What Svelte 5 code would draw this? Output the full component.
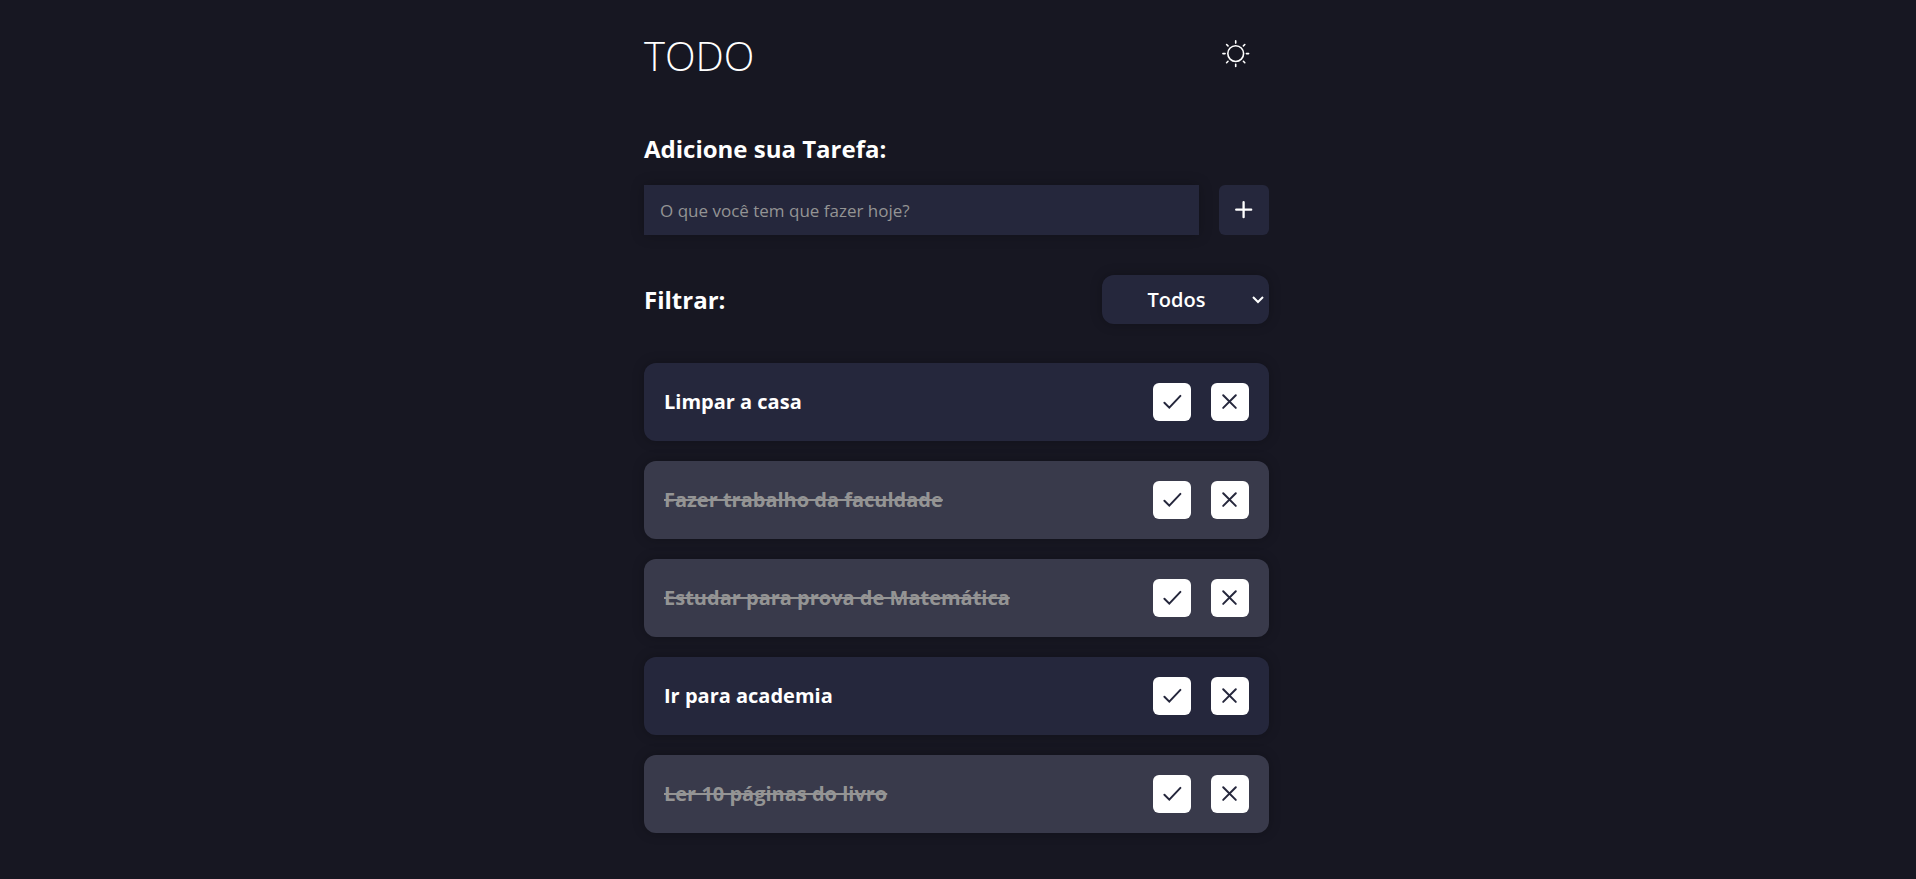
<script>
  let tasks = $state([
    { id: 1, title: 'Limpar a casa', done: false },
    { id: 2, title: 'Fazer trabalho da faculdade', done: true },
    { id: 3, title: 'Estudar para prova de Matemática', done: true },
    { id: 4, title: 'Ir para academia', done: false },
    { id: 5, title: 'Ler 10 páginas do livro', done: true }
  ]);
  let draft = $state('');
  let filter = $state('all');
  let light = $state(false);

  let visible = $derived(
    tasks.filter((t) => filter === 'all' || (filter === 'done' ? t.done : !t.done))
  );

  function add(event) {
    event.preventDefault();
    const title = draft.trim();
    if (!title) return;
    tasks.push({ id: Date.now(), title, done: false });
    draft = '';
  }

  function remove(id) {
    tasks = tasks.filter((t) => t.id !== id);
  }
</script>

<div class="page" class:light>
  <main>
    <header>
      <h1>TODO</h1>
      <button class="theme" type="button" aria-label="Alternar tema" onclick={() => (light = !light)}>
        <svg viewBox="0 0 28 28" width="28" height="28" fill="none" stroke="currentColor" stroke-width="1.6" stroke-linecap="round" aria-hidden="true">
          <circle cx="13.7" cy="13.6" r="7.9" />
          <path d="M13.7 .9v2.2M13.7 24.3v2.2M.9 13.6h2.2M24.4 13.6h2.2M4.6 4.5l1.4 1.4M21.4 21.3l1.4 1.4M4.6 22.7l1.4-1.4M21.4 5.9l1.4-1.4" />
        </svg>
      </button>
    </header>

    <form onsubmit={add}>
      <label for="task">Adicione sua Tarefa:</label>
      <div class="entry">
        <input id="task" type="text" placeholder="O que você tem que fazer hoje?" bind:value={draft} />
        <button class="add" type="submit" aria-label="Adicionar">
          <svg viewBox="0 0 18 18" width="18" height="18" fill="none" stroke="currentColor" stroke-width="2.3" stroke-linecap="round" aria-hidden="true">
            <path d="M8.6 1.2v15M1.2 8.7h15" />
          </svg>
        </button>
      </div>
    </form>

    <section class="filter">
      <label for="filter">Filtrar:</label>
      <div class="select">
        <select id="filter" bind:value={filter}>
          <option value="all">Todos</option>
          <option value="done">Feitos</option>
          <option value="open">A fazer</option>
        </select>
        <svg viewBox="0 0 12 8" width="12" height="8" fill="none" stroke="currentColor" stroke-width="2" aria-hidden="true">
          <path d="M1 1l5 5 5-5" />
        </svg>
      </div>
    </section>

    <ul>
      {#each visible as task (task.id)}
        <li class:done={task.done}>
          <h3>{task.title}</h3>
          <button type="button" aria-label="Concluir" onclick={() => (task.done = !task.done)}>
            <svg viewBox="0 0 20 20" width="20" height="20" fill="none" stroke="currentColor" stroke-width="2" stroke-linecap="round" aria-hidden="true">
              <path d="M2.4 10.8l4.9 4.8L18.4 3.9" />
            </svg>
          </button>
          <button type="button" aria-label="Remover" onclick={() => remove(task.id)}>
            <svg viewBox="0 0 20 20" width="20" height="20" fill="none" stroke="currentColor" stroke-width="2" stroke-linecap="round" aria-hidden="true">
              <path d="M3.2 3.3l12.6 12.6M15.8 3.3l-12.6 12.6" />
            </svg>
          </button>
        </li>
      {/each}
    </ul>
  </main>
</div>

<style>
  :global(body) {
    margin: 0;
    background: #171722;
  }

  .page {
    --bg: #171722;
    --card: #25273c;
    --text: #fff;
    box-sizing: border-box;
    min-height: 100vh;
    padding: 31px 15px 32px 12px;
    background: var(--bg);
    color: var(--text);
    font-family: 'Open Sans', 'Noto Sans', sans-serif;
  }

  .page.light {
    --bg: #fafafa;
    --card: #e4e5f1;
    --text: #25273c;
  }

  main {
    max-width: 625px;
    margin: 0 auto;
  }

  h1,
  h3,
  ul {
    margin: 0;
    padding: 0;
  }

  button {
    display: grid;
    place-items: center;
    flex: none;
    padding: 0;
    border: 0;
    cursor: pointer;
  }

  svg {
    display: block;
  }

  header {
    display: flex;
    align-items: flex-start;
    justify-content: space-between;
    padding-right: 19px;
    margin-bottom: 48px;
  }

  h1 {
    font-size: 40px;
    line-height: 50px;
    font-weight: 300;
  }

  .theme {
    margin-top: 9px;
    background: none;
    color: inherit;
  }

  label {
    font-size: 24px;
    line-height: 40px;
    font-weight: 700;
  }

  .entry {
    display: flex;
    gap: 20px;
    margin-top: 16px;
  }

  input,
  .add,
  select,
  li {
    background: var(--card);
    color: var(--text);
    box-shadow: 0 0 12px rgba(0, 0, 0, 0.25);
  }

  input {
    flex: 1;
    min-width: 0;
    box-sizing: border-box;
    height: 50px;
    padding: 0 16px;
    border: 0;
    border-radius: 0;
    font: 400 17px 'Open Sans', 'Noto Sans', sans-serif;
  }

  input::placeholder {
    color: #949494;
  }

  .add {
    width: 50px;
    height: 50px;
    border-radius: 6px;
    box-shadow: none;
  }

  .filter {
    display: flex;
    align-items: center;
    justify-content: space-between;
    margin: 40px 0 39px;
  }

  .select {
    position: relative;
  }

  select {
    display: block;
    appearance: none;
    width: 167px;
    height: 49px;
    padding: 0 18px 0 0;
    border: 0;
    border-radius: 12px;
    font: 600 20px 'Open Sans', 'Noto Sans', sans-serif;
    text-align: center;
    text-align-last: center;
  }

  .select svg {
    position: absolute;
    right: 5px;
    top: 21px;
    pointer-events: none;
  }

  ul {
    display: grid;
    gap: 20px;
    list-style: none;
  }

  li {
    display: flex;
    align-items: center;
    gap: 20px;
    padding: 20px;
    border-radius: 12px;
  }

  li.done {
    background: #393a4b;
    color: #949494;
  }

  h3 {
    flex: 1;
    font-size: 20px;
    line-height: 28px;
    font-weight: 700;
  }

  .done h3 {
    text-decoration: line-through;
  }

  li button {
    width: 38px;
    height: 38px;
    border-radius: 6px;
    background: #fff;
    color: #25273c;
  }
</style>
